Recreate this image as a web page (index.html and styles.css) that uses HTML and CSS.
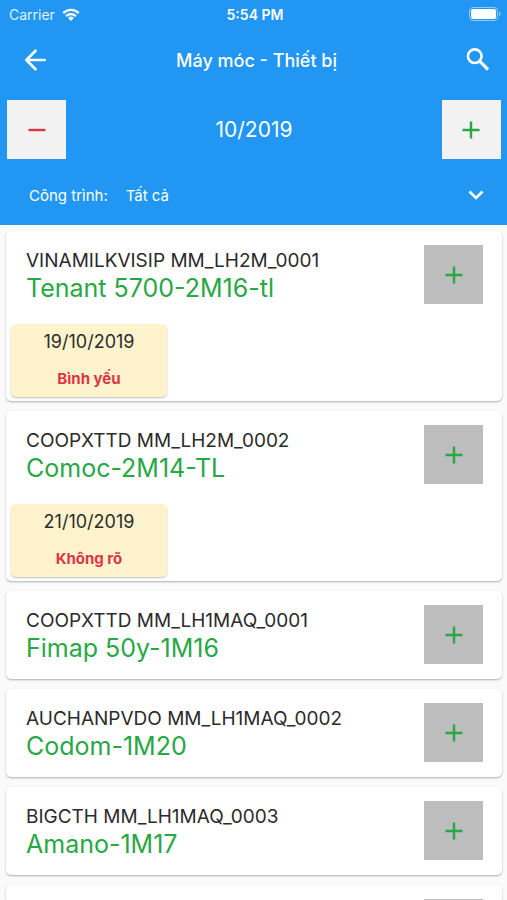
FILE: index.html
```html
<!DOCTYPE html>
<html lang="vi">
<head>
<meta charset="utf-8">
<meta name="viewport" content="width=device-width, initial-scale=1">
<title>Máy móc - Thiết bị</title>
<link rel="stylesheet" href="styles.css">
</head>
<body>
<svg class="symbols" aria-hidden="true">
  <symbol id="plus" viewBox="0 0 24 24"><path d="M12 3.5v17M3.5 12h17" fill="none" stroke="currentColor" stroke-width="2.4"/></symbol>
</svg>
<header class="header">
  <div class="status">
    <div class="carrier">Carrier
      <svg class="wifi" viewBox="0 0 18 13" aria-hidden="true"><g fill="none" stroke="currentColor" stroke-width="2.2"><path d="M1.2 5.1a11 11 0 0 1 15.6 0"/><path d="M4.1 8.1a7 7 0 0 1 9.8 0"/></g><path d="M6.1 10a4.2 4.2 0 0 1 5.8 0L9 12.9z" fill="currentColor"/></svg>
    </div>
    <div class="time">5:54 PM</div>
    <svg class="battery" viewBox="0 0 32 14" aria-hidden="true"><rect x="0.5" y="0.5" width="28" height="13" rx="3.5" fill="none" stroke="#8fc9fa"/><rect x="2" y="2" width="25" height="10" rx="2" fill="#fff"/><path d="M30 4.8v4.4q1.6-.6 1.6-2.2T30 4.8z" fill="#8fc9fa"/></svg>
  </div>
  <div class="toolbar">
    <button class="icon-button" aria-label="Quay lại"><svg viewBox="0 0 24 24"><path d="M21 12H4M12.500 3.500L4 12l8.500 8.500" fill="none" stroke="currentColor" stroke-width="2.500" stroke-linecap="round" stroke-linejoin="round"/></svg></button>
    <h1 class="title">Máy móc - Thiết bị</h1>
    <button class="icon-button" aria-label="Tìm kiếm"><svg viewBox="0 0 24 24"><circle cx="9" cy="8.500" r="6.300" fill="none" stroke="currentColor" stroke-width="2.400"/><path d="M13.500 13l7.800 7.800" fill="none" stroke="currentColor" stroke-width="3"/></svg></button>
  </div>
  <div class="month">
    <button class="square light minus" aria-label="Tháng trước"><svg viewBox="0 0 24 24"><path d="M3.5 12h17" fill="none" stroke="currentColor" stroke-width="2.4"/></svg></button>
    <div class="month-value">10/2019</div>
    <button class="square light" aria-label="Tháng sau"><svg><use href="#plus"/></svg></button>
  </div>
  <div class="filter">
    <label for="site">Công trình:</label>
    <select id="site"><option>Tất cả</option></select>
    <svg class="chevron" viewBox="0 0 16 10" aria-hidden="true"><path d="M1.5 1.5L8 8l6.500-6.500" fill="none" stroke="currentColor" stroke-width="2.6"/></svg>
  </div>
</header>
<main class="list">
  <article class="card">
    <div class="card-head">
      <div class="info"><p class="code">VINAMILKVISIP MM_LH2M_0001</p><h2 class="name">Tenant 5700-2M16-tl</h2></div>
      <button class="square" aria-label="Thêm"><svg><use href="#plus"/></svg></button>
    </div>
    <div class="record"><time class="date">19/10/2019</time><strong class="state">Bình yếu</strong></div>
  </article>
  <article class="card">
    <div class="card-head">
      <div class="info"><p class="code">COOPXTTD MM_LH2M_0002</p><h2 class="name">Comoc-2M14-TL</h2></div>
      <button class="square" aria-label="Thêm"><svg><use href="#plus"/></svg></button>
    </div>
    <div class="record"><time class="date">21/10/2019</time><strong class="state">Không rõ</strong></div>
  </article>
  <article class="card">
    <div class="card-head">
      <div class="info"><p class="code">COOPXTTD MM_LH1MAQ_0001</p><h2 class="name">Fimap 50y-1M16</h2></div>
      <button class="square" aria-label="Thêm"><svg><use href="#plus"/></svg></button>
    </div>
  </article>
  <article class="card">
    <div class="card-head">
      <div class="info"><p class="code">AUCHANPVDO MM_LH1MAQ_0002</p><h2 class="name">Codom-1M20</h2></div>
      <button class="square" aria-label="Thêm"><svg><use href="#plus"/></svg></button>
    </div>
  </article>
  <article class="card">
    <div class="card-head">
      <div class="info"><p class="code">BIGCTH MM_LH1MAQ_0003</p><h2 class="name">Amano-1M17</h2></div>
      <button class="square" aria-label="Thêm"><svg><use href="#plus"/></svg></button>
    </div>
  </article>
  <article class="card">
    <div class="card-head">
      <div class="info"></div>
      <button class="square" aria-label="Thêm"><svg><use href="#plus"/></svg></button>
    </div>
  </article>
</main>
</body>
</html>
```
FILE: styles.css
```css
* {
  box-sizing: border-box;
}

body {
  margin: 0;
  height: 100vh;
  display: flex;
  flex-direction: column;
  overflow: hidden;
  background: #fafafa;
  color: #2b2b2b;
  font-family: Inter, "Liberation Sans", sans-serif;
}

button {
  padding: 0;
  border: 0;
  background: none;
  color: inherit;
  display: grid;
  place-items: center;
}

h1,
h2,
p {
  margin: 0;
  font-weight: 400;
}

.symbols {
  display: none;
}

.header {
  flex: none;
  background: #2196f3;
  color: #fff;
}

.status {
  display: grid;
  grid-template-columns: 1fr auto 1fr;
  align-items: center;
  height: 28px;
  padding: 0 6px 0 9px;
  font-size: 14px;
}

.carrier {
  display: flex;
  align-items: center;
  gap: 7px;
  color: #e3f2fe;
}

.wifi {
  width: 18px;
  height: 13px;
  color: #fff;
}

.time {
  font-size: 14px;
  font-weight: 600;
}

.battery {
  width: 32px;
  height: 14px;
  justify-self: end;
}

.toolbar {
  display: flex;
  align-items: center;
  justify-content: space-between;
  height: 64px;
  padding: 0 16px 0 22px;
}

.icon-button {
  width: 26px;
  height: 26px;
}

.icon-button svg {
  width: 26px;
  height: 26px;
}

.title {
  font-size: 18px;
  font-weight: 500;
}

.month {
  display: flex;
  align-items: center;
  justify-content: space-between;
  padding: 8px 6px 0 7px;
}

.month-value {
  font-size: 21px;
}

.square {
  flex: none;
  width: 59px;
  height: 59px;
  background: #bdbdbd;
  color: #28a745;
}

.square svg {
  width: 24px;
  height: 24px;
}

.light {
  background: #f2f2f2;
}

.minus {
  color: #dc3545;
}

.filter {
  display: flex;
  align-items: center;
  height: 66px;
  padding: 6px 23px 0 29px;
  font-size: 15px;
}

.filter select {
  flex: 1;
  appearance: none;
  margin-left: 18px;
  padding: 0;
  border: 0;
  background: none;
  color: inherit;
  font: inherit;
}

.chevron {
  width: 16px;
  height: 10px;
}

.list {
  flex: 1;
  min-height: 0;
  overflow: hidden;
  padding: 6px 5px 0 6px;
}

.card {
  margin-bottom: 10px;
  padding-bottom: 4px;
  border-radius: 5px;
  background: #fff;
  box-shadow: 0 1px 2px rgba(0, 0, 0, 0.3);
}

.card-head {
  display: flex;
  justify-content: space-between;
  height: 84px;
  padding: 14px 19px 0 20px;
}

.info {
  padding-top: 4px;
}

.code {
  font-size: 19px;
  line-height: 24px;
}

.name {
  color: #28a745;
  font-size: 25px;
  line-height: 30px;
}

.record {
  display: flex;
  flex-direction: column;
  align-items: center;
  justify-content: space-between;
  width: 156px;
  height: 73px;
  margin: 9px 0 0 5px;
  padding: 8px 0;
  border-radius: 5px;
  background: #fff3cd;
  box-shadow: 0 1px 2px rgba(0, 0, 0, 0.25);
}

.date {
  font-size: 18px;
  line-height: 20px;
}

.state {
  color: #dc3545;
  font-size: 15px;
  font-weight: 700;
  line-height: 20px;
}
```
